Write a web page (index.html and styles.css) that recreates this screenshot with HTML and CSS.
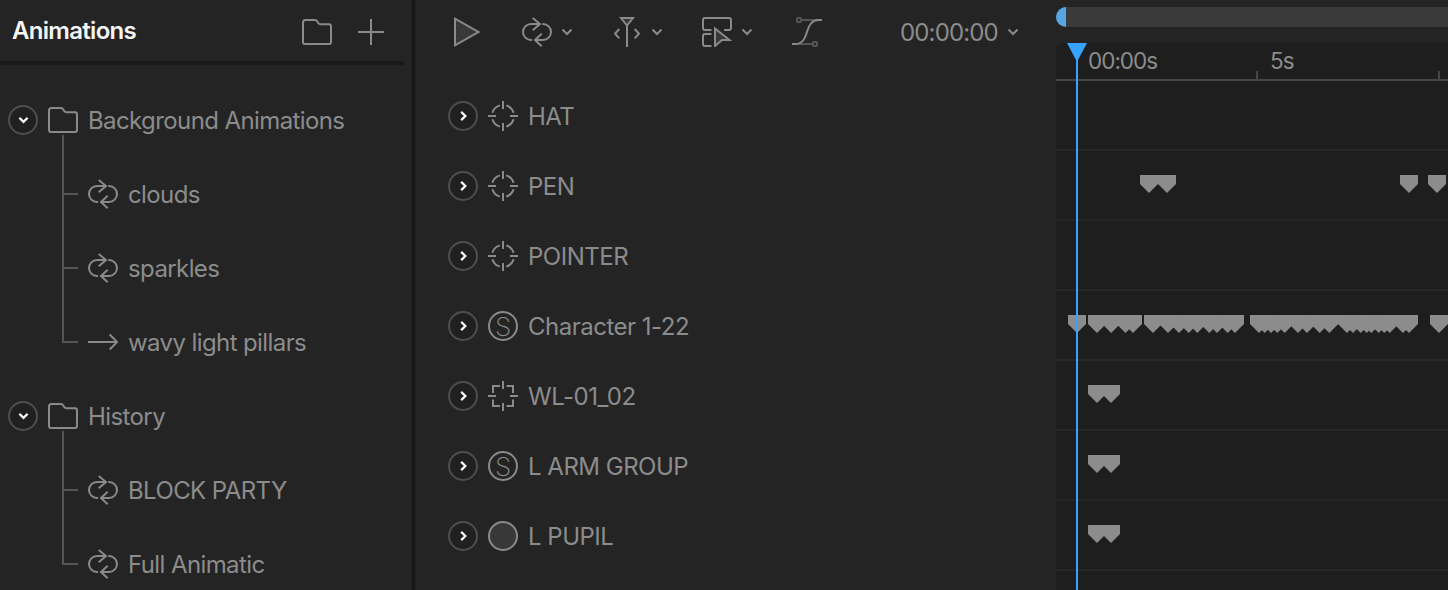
FILE: index.html
```
<!DOCTYPE html>
<html lang="en">

<head>
    <meta charset="UTF-8">
    <meta name="viewport" content="width=device-width, initial-scale=1.0">
    <title>Animations</title>
    <link rel="stylesheet" href="styles.css">
</head>

<body>
    <!-- shared icons -->
    <svg class="defs" width="0" height="0">
        <symbol id="folder" viewBox="0 0 30 26">
            <path d="M1 23V3.5Q1 1 3.5 1H13Q14.5 1 15.3 2.5L16.2 4Q17 5.3 18.5 5.3H27Q29 5.3 29 7.3V23Q29 25 27 25H3Q1 25 1 23Z" />
        </symbol>
        <symbol id="loop" viewBox="0 0 30 30">
            <path d="M18 7H9A8 8 0 0 0 9 23H10M10.7 1L18 7L10.7 13.2M20.3 7H21A8 8 0 0 1 21 23H13M19.7 16.8L13 23L19.7 29.2" />
        </symbol>
        <symbol id="arrow" viewBox="0 0 30 30">
            <path d="M0 15H29M21.7 7.5L29.2 15L21.7 22.5" />
        </symbol>
        <symbol id="chevron" viewBox="0 0 12 8">
            <path d="M1.5 1.5L6 6L10.5 1.5" />
        </symbol>
        <symbol id="target" viewBox="0 0 30 30">
            <path d="M15 0V8M15 22V30M0 15H8M22 15H30M18.2 4.4A11 11 0 0 1 25.6 11.8M25.6 18.2A11 11 0 0 1 18.2 25.6M11.8 25.6A11 11 0 0 1 4.4 18.2M4.4 11.8A11 11 0 0 1 11.8 4.4" />
        </symbol>
        <symbol id="square-target" viewBox="0 0 30 30">
            <path d="M15 0V8M15 22V30M0 15H8M22 15H30M18.5 5H25V12M25 18.5V25H18.5M12 25H5V18.5M5 12V5H12" />
        </symbol>
        <path id="key" d="M-9 0H9V9L0 18L-9 9Z" />
    </svg>

    <div class="app">
        <div class="sidebar">
            <div class="sidebar-header">
                <h1>Animations</h1>
                <svg class="icon" width="30" height="26"><use href="#folder" /></svg>
                <svg class="icon" width="26" height="26"><path d="M13 0V26M0 13H26" /></svg>
            </div>

            <div class="tree">
                <div class="row">
                    <span class="toggle"><svg width="12" height="8"><use href="#chevron" /></svg></span>
                    <svg class="icon" width="30" height="26"><use href="#folder" /></svg>
                    <span class="name">Background Animations</span>
                </div>
                <ul>
                    <li><span class="branch"><i></i><b></b></span><svg class="icon" width="30" height="30"><use href="#loop" /></svg><span class="name">clouds</span></li>
                    <li><span class="branch"><i></i><b></b></span><svg class="icon" width="30" height="30"><use href="#loop" /></svg><span class="name">sparkles</span></li>
                    <li><span class="branch"><i></i><b></b></span><svg class="icon" width="30" height="30"><use href="#arrow" /></svg><span class="name">wavy light pillars</span></li>
                </ul>
                <div class="row">
                    <span class="toggle"><svg width="12" height="8"><use href="#chevron" /></svg></span>
                    <svg class="icon" width="30" height="26"><use href="#folder" /></svg>
                    <span class="name">History</span>
                </div>
                <ul>
                    <li><span class="branch"><i></i><b></b></span><svg class="icon" width="30" height="30"><use href="#loop" /></svg><span class="name">BLOCK PARTY</span></li>
                    <li><span class="branch"><i></i><b></b></span><svg class="icon" width="30" height="30"><use href="#loop" /></svg><span class="name">Full Animatic</span></li>
                </ul>
            </div>
        </div>

        <div class="layers">
            <div class="toolbar">
                <svg class="icon play" width="28" height="30"><path class="filled" d="M1 1.7V28.3L24.5 15Z" /></svg>
                <div class="tool">
                    <svg class="icon" width="30" height="30"><use href="#loop" /></svg>
                    <svg class="icon" width="12" height="8"><use href="#chevron" /></svg>
                </div>
                <div class="tool tool-pin">
                    <svg class="icon" width="26" height="30">
                        <path class="filled" d="M7 1H19L13 8.5Z" />
                        <path d="M13 8.5V30M5.3 12L1 16.7L5.3 21.4M20.7 12L25 16.7L20.7 21.4" />
                    </svg>
                    <svg class="icon" width="12" height="8"><use href="#chevron" /></svg>
                </div>
                <div class="tool tool-select">
                    <svg class="icon" width="30" height="30">
                        <path d="M9.5 13H3Q1 13 1 11V3Q1 1 3 1H27Q29 1 29 3V11Q29 13 27 13H22M9.5 17H3Q1 17 1 19V27Q1 29 3 29H9.5" />
                        <path class="filled" d="M13 11.5L27.5 23H20L13 29Z" />
                    </svg>
                    <svg class="icon" width="12" height="8"><use href="#chevron" /></svg>
                </div>
                <svg class="icon curve" width="30" height="30">
                    <path class="handle" d="M9 3H26M4 27H21" />
                    <circle class="handle" cx="7" cy="3" r="2.2" />
                    <circle class="handle" cx="23" cy="27" r="2.2" />
                    <path d="M0 27H3C19 27 11 3 27 3H30" />
                </svg>
                <div class="tool time">
                    <span class="name">00:00:00</span>
                    <svg class="icon" width="12" height="8"><use href="#chevron" /></svg>
                </div>
            </div>

            <div class="layer"><span class="toggle closed"><svg width="12" height="8"><use href="#chevron" /></svg></span><svg class="icon" width="30" height="30"><use href="#target" /></svg><span class="name">HAT</span></div>
            <div class="layer"><span class="toggle closed"><svg width="12" height="8"><use href="#chevron" /></svg></span><svg class="icon" width="30" height="30"><use href="#target" /></svg><span class="name">PEN</span></div>
            <div class="layer"><span class="toggle closed"><svg width="12" height="8"><use href="#chevron" /></svg></span><svg class="icon" width="30" height="30"><use href="#target" /></svg><span class="name">POINTER</span></div>
            <div class="layer"><span class="toggle closed"><svg width="12" height="8"><use href="#chevron" /></svg></span><span class="symbol">S</span><span class="name">Character 1-22</span></div>
            <div class="layer"><span class="toggle closed"><svg width="12" height="8"><use href="#chevron" /></svg></span><svg class="icon" width="30" height="30"><use href="#square-target" /></svg><span class="name">WL-01_02</span></div>
            <div class="layer"><span class="toggle closed"><svg width="12" height="8"><use href="#chevron" /></svg></span><span class="symbol">S</span><span class="name">L ARM GROUP</span></div>
            <div class="layer"><span class="toggle closed"><svg width="12" height="8"><use href="#chevron" /></svg></span><span class="ellipse"></span><span class="name">L PUPIL</span></div>
        </div>

        <div class="timeline">
            <div class="scrollbar"><div class="handle-left"></div></div>
            <div class="ruler">
                <div class="mark"><span>00:00s</span></div>
                <div class="mark"><span>5s</span></div>
            </div>
            <svg class="track"></svg>
            <svg class="track" data-keys="93 111 353 381"></svg>
            <svg class="track"></svg>
            <svg class="track" data-keys="21 41 55.2 69.5 77 97 112 123 132.7 141.3 153.3 161 171.7 179 203 208.7 215 221.3 228.7 242 251 263.7 273.3 291 297 304.7 310.7 315.3 322.7 328.3 333.7 347 353 383"></svg>
            <svg class="track" data-keys="41 55"></svg>
            <svg class="track" data-keys="41 55"></svg>
            <svg class="track" data-keys="41 55"></svg>
            <svg class="track"></svg>
            <svg class="playhead" width="20" height="547"><path d="M0 0H20L11 17V547H9V17Z" /></svg>
        </div>
    </div>

    <script src="script.js"></script>
</body>

</html>
```
FILE: styles.css
```
* {
    box-sizing: border-box;
}

body {
    margin: 0;
    background-color: #242424;
    color: #8c8c8c;
    font-family: Inter, "Liberation Sans", sans-serif;
    font-size: 24px;
    font-weight: 430;
    letter-spacing: -0.5px;
    overflow: hidden;
}

.defs {
    position: absolute;
}

.app {
    display: flex;
    height: 590px;
    overflow: hidden;
}

svg {
    display: block;
    flex: none;
}

.icon {
    fill: none;
    stroke: #8a8a8a;
    stroke-width: 2;
}

.filled {
    fill: #383838;
}

.name {
    white-space: nowrap;
    line-height: 30px;
    padding-top: 2px;
}

/* left panel */
.sidebar {
    width: 416px;
    flex: none;
    background: linear-gradient(to right, #242424 411px, #141414 413px, #1b1b1b 415px, #242424 416px);
}

.sidebar-header {
    display: flex;
    align-items: center;
    width: 404px;
    height: 65px;
    padding: 3px 20px 0 12px;
    gap: 26px;
    border-bottom: 4px solid #181818;
    border-radius: 0 0 2px 0;
}

h1 {
    flex: 1;
    margin: 0 0 2px;
    color: #f5f5f5;
    font-size: 24px;
    font-weight: 600;
    line-height: 30px;
    letter-spacing: -0.7px;
}

.tree {
    padding-top: 18px;
    letter-spacing: -0.6px;
}

.row,
.tree li {
    display: flex;
    align-items: center;
    height: 74px;
    gap: 10px;
}

.row {
    padding-left: 8px;
}

.tree ul {
    list-style: none;
    margin: 0;
    padding: 0 0 0 62px;
}

.branch {
    display: flex;
    flex-direction: column;
    align-self: stretch;
    width: 16px;
}

.branch i {
    flex: 1;
    border-left: 2px solid #555;
    border-bottom: 2px solid #555;
}

.branch b {
    height: 36px;
    border-left: 2px solid #555;
}

.tree li:first-child .branch {
    margin-top: -22px;
}

.tree li:last-child .branch b {
    border-color: transparent;
}

.toggle {
    display: flex;
    align-items: center;
    justify-content: center;
    width: 30px;
    height: 30px;
    flex: none;
    border: 2px solid #4e4e4e;
    border-radius: 50%;
    background-color: #202020;
    fill: none;
    stroke: #fff;
    stroke-width: 2.4;
}

.toggle svg {
    width: 11px;
}

.closed svg {
    transform: rotate(-90deg);
}

/* layer list */
.layers {
    width: 640px;
    flex: none;
    padding-left: 32px;
}

.toolbar {
    display: flex;
    align-items: center;
    height: 64px;
    margin-bottom: 17px;
    padding-left: 6px;
}

.tool {
    display: flex;
    align-items: center;
    gap: 9px;
    margin-left: 40px;
}

.tool-pin {
    margin-left: 41px;
    gap: 11px;
}

.tool-select {
    margin-left: 39px;
}

.curve {
    margin-left: 39px;
}

.handle {
    stroke: #555;
}

.time {
    margin-left: 78px;
    letter-spacing: -0.85px;
}

.layer {
    display: flex;
    align-items: center;
    height: 70px;
    gap: 10px;
}

.symbol,
.ellipse {
    width: 30px;
    height: 30px;
    flex: none;
    border: 2px solid #8a8a8a;
    border-radius: 50%;
}

.symbol {
    font-size: 26px;
    font-weight: 250;
    line-height: 27px;
    text-align: center;
    letter-spacing: 0;
}

.ellipse {
    background-color: #383838;
}

/* timeline */
.timeline {
    position: relative;
    flex: 1;
    min-width: 0;
    padding-top: 7px;
}

.scrollbar {
    height: 20px;
    border-radius: 10px 0 0 10px;
    background-color: #3a3a3a;
    overflow: hidden;
}

.handle-left {
    width: 10px;
    height: 20px;
    background-color: #58a5e4;
}

.ruler {
    display: flex;
    height: 38px;
    margin-top: 16px;
    padding-left: 20px;
    background-color: #1e1e1e;
    border-bottom: 2px solid #454545;
    border-radius: 8px 0 0 0;
    font-size: 22.5px;
    letter-spacing: -1px;
    overflow: hidden;
}

.mark {
    width: 182px;
    flex: none;
    padding-left: 12px;
    line-height: 36px;
    background: linear-gradient(#454545, #454545) right bottom / 2px 8px no-repeat;
}

.track {
    width: 100%;
    height: 70px;
    fill: #8c8c8c;
    background-color: #1e1e1e;
    border-bottom: 2px solid #282828;
}

.playhead {
    position: absolute;
    left: 11px;
    top: 43px;
    fill: #35a3ff;
}
```
FILE: script.js
```
const tracks = document.querySelectorAll('.track[data-keys]');

tracks.forEach((track) => {
    track.dataset.keys.split(' ').forEach((x) => {
        const key = document.createElementNS('http://www.w3.org/2000/svg', 'use');
        key.setAttribute('href', '#key');
        key.setAttribute('x', x);
        key.setAttribute('y', 24);
        track.append(key);
    });
});
```
